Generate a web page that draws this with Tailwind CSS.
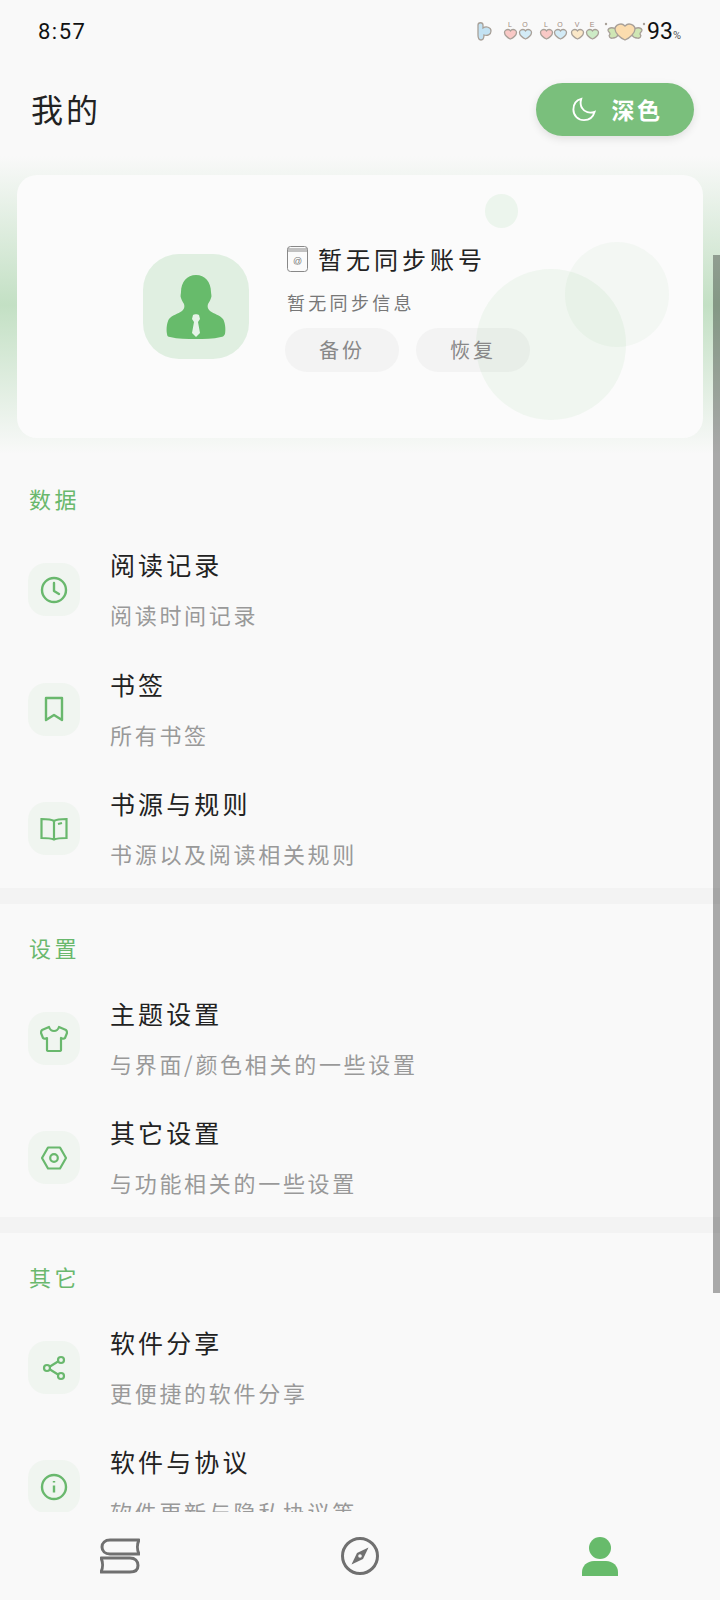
<!DOCTYPE html>
<html lang="zh">
<head>
<meta charset="UTF-8">
<meta name="viewport" content="width=device-width, initial-scale=1.0">
<script src="https://cdn.jsdelivr.net/npm/@tailwindcss/browser@4"></script>
</head>
<body class="bg-[#f9f9f9]">
<div class="relative w-[720px] h-[1600px] overflow-hidden flex flex-col bg-[#f9f9f9] font-['Noto_Sans_CJK_SC','Noto_Sans',sans-serif]">

  <!-- status bar -->
  <div class="h-[62px] shrink-0 flex items-center justify-between pl-[38px] pr-[39px] text-[#111]">
    <span class="font-['Roboto',sans-serif] text-[22px] tracking-[1.500px]">8:57</span>
    <div class="flex items-center">
      <svg class="w-[172px] h-[24px]" viewBox="476 18 172 24" fill="none" stroke="#a8a098" stroke-width="1.300">
        <path d="M479 24c0-3 5-3 5 0v3c3-2 8-1 8 3s-4 5-7 4c0 3-1 5-3 5s-3-2-3-5z" fill="#c3e2f3"/>
        <g id="hearts">
          <path d="M511.500 38c-3-1-6-4-6-6.500 0-2 2-3 3.500-3 1 0 2 .500 2.500 1.300.500-.8 1.500-1.300 2.500-1.300 1.500 0 3.500 1 3.500 3 0 2.500-3 5.500-6 6.500z" fill="#f9c9c6"/>
          <path d="M526.500 38c-3-1-6-4-6-6.500 0-2 2-3 3.500-3 1 0 2 .500 2.500 1.300.500-.8 1.500-1.300 2.500-1.300 1.500 0 3.500 1 3.500 3 0 2.500-3 5.500-6 6.500z" fill="#d3ebf6"/>
          <path d="M547.500 38c-3-1-6-4-6-6.500 0-2 2-3 3.500-3 1 0 2 .500 2.500 1.300.500-.8 1.500-1.300 2.500-1.300 1.500 0 3.500 1 3.500 3 0 2.500-3 5.500-6 6.500z" fill="#f9c9c6"/>
          <path d="M561.500 38c-3-1-6-4-6-6.500 0-2 2-3 3.500-3 1 0 2 .500 2.500 1.300.500-.8 1.500-1.300 2.500-1.300 1.500 0 3.500 1 3.500 3 0 2.500-3 5.500-6 6.500z" fill="#d3ebf6"/>
          <path d="M578.500 38c-3-1-6-4-6-6.500 0-2 2-3 3.500-3 1 0 2 .500 2.500 1.300.500-.8 1.500-1.300 2.500-1.300 1.500 0 3.500 1 3.500 3 0 2.500-3 5.500-6 6.500z" fill="#fbe8c8"/>
          <path d="M593.500 38c-3-1-6-4-6-6.500 0-2 2-3 3.500-3 1 0 2 .500 2.500 1.300.500-.8 1.500-1.300 2.500-1.300 1.500 0 3.500 1 3.500 3 0 2.500-3 5.500-6 6.500z" fill="#cdebc6"/>
        </g>
        <g fill="#a08a80" stroke="none" font-size="7" font-family="Liberation Sans, sans-serif" text-anchor="middle">
          <text x="511" y="26">L</text><text x="526" y="26">O</text><text x="547" y="26">L</text><text x="561" y="26">O</text><text x="578" y="26">V</text><text x="593" y="26">E</text>
        </g>
        <path d="M618 29c-3-3-8-3-9 0 0 2 2 2 2 4-2 2 0 5 3 4 2 0 4-1 5-3z" fill="#cfe6b4"/>
        <path d="M634 29c3-3 8-3 9 0 0 2-2 2-2 4 2 2 0 5-3 4-2 0-4-1-5-3z" fill="#cfe6b4"/>
        <path d="M626 39c-5-2-10-7-10-11 0-3 3-5 6-5 2 0 3 1 4 2 1-1 2-2 4-2 3 0 6 2 6 5 0 4-5 9-10 11z" fill="#fbdcae"/>
        <circle cx="607" cy="23" r="1.200" fill="#a8a098" stroke="none"/>
        <circle cx="645" cy="23" r="1.200" fill="#a8a098" stroke="none"/>
      </svg>
      <span class="font-['Roboto',sans-serif] text-[23px] leading-none">93<span class="text-[11px] text-[#555]">%</span></span>
    </div>
  </div>

  <!-- page title -->
  <div class="h-[94px] shrink-0 flex items-center justify-between pl-[31px] pr-[26px]">
    <h1 class="text-[32px] tracking-[3px] text-[#222] font-normal leading-none -mt-[2px]">我的</h1>
    <button class="w-[158px] h-[53px] pl-[4px] rounded-full bg-[#7abf7c] shadow-[0_3px_8px_rgba(0,0,0,0.1)] flex items-center justify-center gap-[16px] text-white text-[23px] font-bold tracking-[2.500px]">
      <svg class="w-[24px] h-[25px]" viewBox="0 0 26 27" fill="none" stroke="#fff" stroke-width="2"><path d="M10 2C4.500 3.500 1.500 8 1.500 13.500 1.500 20 6.500 25 13 25c5.500 0 10-3.500 11.500-9-5.500 2-11 .5-13.500-4C9 9 9 5.500 10 2z"/></svg>
      深色
    </button>
  </div>

  <!-- account card with green glow behind it -->
  <div class="shrink-0 h-[298px] pt-[19px] pb-[16px] px-[17px] bg-gradient-to-b from-transparent via-[#c3e0c4] to-transparent">
    <div class="relative h-full rounded-[20px] bg-[#fbfbfb] overflow-hidden pl-[126px] pt-[69px]">
      <div class="absolute left-[468px] top-[19px] w-[33px] h-[34px] rounded-full bg-[#ecf5ed]"></div>
      <div class="absolute left-[459px] top-[94px] w-[150px] h-[151px] rounded-full bg-[#64b968]/7"></div>
      <div class="absolute left-[548px] top-[67px] w-[104px] h-[105px] rounded-full bg-[#64b968]/5"></div>
      <div class="relative flex items-start gap-[37px]">
        <div class="mt-[10px] w-[106px] h-[105px] rounded-[36px] bg-[#e0efe1] flex items-center justify-center">
          <svg class="w-[60px] h-[64px]" viewBox="0 0 60 64"><path fill="#67bb6b" d="M30 0c9 0 15 7 15 17 0 2 1 4 0 6-1 3-2 4-3 6-1 3 0 5 2 7 4 3 10 4 13 8 2 3 3 10 2 15-1 2-2 3-4 3-8 2-17 2-25 2-9 0-18 0-26-2-2 0-3-1-3-3-1-5 0-12 2-15 3-4 9-5 13-8 2-2 3-4 2-7-1-2-2-3-3-6-1-2 0-4 0-6C15 7 21 0 30 0z"/><path fill="#e6f3e7" d="M27 40c1-1 5-1 6 0l1 4-2 3 2 11-4 4-4-4 2-11-2-3z"/></svg>
        </div>
        <div class="flex flex-col items-start">
          <div class="flex items-center gap-[10px] h-[30px]">
            <svg class="w-[21px] h-[26px] ml-[1px]" viewBox="0 0 21 26" fill="none" stroke="#888" stroke-width="1"><rect x=".500" y=".500" width="20" height="25" rx="3"/><path d="M.500 5h20M.500 3h20"/><text x="10.500" y="18" font-size="9" text-anchor="middle" fill="#777" stroke="none" font-family="Liberation Sans, sans-serif">@</text></svg>
            <span class="text-[24px] tracking-[4px] text-[#222] leading-none">暂无同步账号</span>
          </div>
          <div class="mt-[15px] ml-[1px] text-[18px] tracking-[3.300px] text-[#777] leading-[26px]">暂无同步信息</div>
          <div class="flex gap-[17px] mt-[13px] -ml-[1px]">
            <button class="w-[114px] h-[44px] rounded-[22px] bg-[#5a5a5a]/5 text-[#888] text-[20px] tracking-[3px]">备份</button>
            <button class="w-[114px] h-[44px] rounded-[22px] bg-[#5a5a5a]/5 text-[#888] text-[20px] tracking-[3px]">恢复</button>
          </div>
        </div>
      </div>
    </div>
  </div>

  <!-- data -->
  <section class="shrink-0 pt-[28px] h-[434px]">
    <h2 class="pl-[29px] text-[22px] tracking-[3.500px] text-[#69b86d] leading-[32px] font-normal">数据</h2>
    <div class="mt-[16px] flex flex-col">
      <a class="flex gap-[30px] h-[119.500px] pl-[28px] items-center">
        <span class="w-[52px] h-[53px] rounded-[18px] bg-[#f0f5f0] flex items-center justify-center text-[#69b86d]">
          <svg class="w-[28px] h-[28px]" viewBox="0 0 28 28" fill="none" stroke="currentColor" stroke-width="2.400"><circle cx="14" cy="14" r="12"/><path d="M14 7v8l5 3" stroke-linecap="round" stroke-linejoin="round"/></svg>
        </span>
        <span class="flex flex-col -mt-[4px]">
          <span class="text-[25px] tracking-[3.100px] text-[#222] leading-[36px]">阅读记录</span>
          <span class="mt-[17px] text-[22px] tracking-[2.700px] text-[#999] leading-[30px]">阅读时间记录</span>
        </span>
      </a>
      <a class="flex gap-[30px] h-[119.500px] pl-[28px] items-center">
        <span class="w-[52px] h-[53px] rounded-[18px] bg-[#f0f5f0] flex items-center justify-center text-[#69b86d]">
          <svg class="w-[20px] h-[26px]" viewBox="0 0 20 26" fill="none" stroke="currentColor" stroke-width="2.400"><path d="M2 2h16v22l-8-5-8 5z" stroke-linejoin="round"/></svg>
        </span>
        <span class="flex flex-col -mt-[4px]">
          <span class="text-[25px] tracking-[3.100px] text-[#222] leading-[36px]">书签</span>
          <span class="mt-[17px] text-[22px] tracking-[2.700px] text-[#999] leading-[30px]">所有书签</span>
        </span>
      </a>
      <a class="flex gap-[30px] h-[119.500px] pl-[28px] items-center">
        <span class="w-[52px] h-[53px] rounded-[18px] bg-[#f0f5f0] flex items-center justify-center text-[#69b86d]">
          <svg class="w-[28px] h-[24px]" viewBox="0 0 28 24" fill="none" stroke="currentColor" stroke-width="2.200"><path d="M14 4C11 2 5 2 1.500 2v19c4 0 9 0 12.500 1.500C17.500 21 22 21 26.500 21V2C22 2 17 2 14 4zM14 4v18M18 7l4-1"/></svg>
        </span>
        <span class="flex flex-col -mt-[4px]">
          <span class="text-[25px] tracking-[3.100px] text-[#222] leading-[36px]">书源与规则</span>
          <span class="mt-[17px] text-[22px] tracking-[2.700px] text-[#999] leading-[30px]">书源以及阅读相关规则</span>
        </span>
      </a>
    </div>
  </section>
  <div class="shrink-0 h-[16px] bg-[#f3f3f3]"></div>

  <!-- settings -->
  <section class="shrink-0 pt-[27px] h-[313px]">
    <h2 class="pl-[29px] text-[22px] tracking-[3.500px] text-[#69b86d] leading-[32px] font-normal">设置</h2>
    <div class="mt-[16px] flex flex-col">
      <a class="flex gap-[30px] h-[119px] pl-[28px] items-center">
        <span class="w-[52px] h-[53px] rounded-[18px] bg-[#f0f5f0] flex items-center justify-center text-[#69b86d]">
          <svg class="w-[28px] h-[28px]" viewBox="0 0 28 28" fill="none" stroke="currentColor" stroke-width="2.200"><path d="M9 2c1 3 3 4 5 4s4-1 5-4l7 3c1 1 1 2 1 3l-2 5c-1 1-2 1-4 0v12c0 1-1 1-2 1H9c-1 0-2 0-2-1V13c-2 1-3 1-4 0L1 8c0-1 0-2 1-3z" stroke-linejoin="round"/></svg>
        </span>
        <span class="flex flex-col -mt-[4px]">
          <span class="text-[25px] tracking-[3.100px] text-[#222] leading-[36px]">主题设置</span>
          <span class="mt-[17px] text-[22px] tracking-[2.700px] text-[#999] leading-[30px]">与界面/颜色相关的一些设置</span>
        </span>
      </a>
      <a class="flex gap-[30px] h-[119px] pl-[28px] items-center">
        <span class="w-[52px] h-[53px] rounded-[18px] bg-[#f0f5f0] flex items-center justify-center text-[#69b86d]">
          <svg class="w-[26px] h-[24px]" viewBox="0 0 26 24" fill="none" stroke="currentColor" stroke-width="2.200"><path d="M7 1.500h12l6 10.500-6 10.500H7L1 12z" stroke-linejoin="round"/><circle cx="13" cy="12" r="3.800"/></svg>
        </span>
        <span class="flex flex-col -mt-[4px]">
          <span class="text-[25px] tracking-[3.100px] text-[#222] leading-[36px]">其它设置</span>
          <span class="mt-[17px] text-[22px] tracking-[2.700px] text-[#999] leading-[30px]">与功能相关的一些设置</span>
        </span>
      </a>
    </div>
  </section>
  <div class="shrink-0 h-[16px] bg-[#f3f3f3]"></div>

  <!-- others: list is cut off by the bottom nav -->
  <section class="flex-1 min-h-0 overflow-hidden pt-[27px]">
    <h2 class="pl-[29px] text-[22px] tracking-[3.500px] text-[#69b86d] leading-[32px] font-normal">其它</h2>
    <div class="mt-[16px] flex flex-col">
      <a class="shrink-0 flex gap-[30px] h-[119px] pl-[28px] items-center">
        <span class="w-[52px] h-[53px] rounded-[18px] bg-[#f0f5f0] flex items-center justify-center text-[#69b86d]">
          <svg class="w-[24px] h-[26px]" viewBox="0 0 24 26" fill="none" stroke="currentColor" stroke-width="2.200"><circle cx="19" cy="5" r="3"/><circle cx="5" cy="13" r="3"/><circle cx="19" cy="21" r="3"/><path d="M8 11.500l8-5M8 14.500l8 5"/></svg>
        </span>
        <span class="flex flex-col -mt-[4px]">
          <span class="text-[25px] tracking-[3.100px] text-[#222] leading-[36px]">软件分享</span>
          <span class="mt-[17px] text-[22px] tracking-[2.700px] text-[#999] leading-[30px]">更便捷的软件分享</span>
        </span>
      </a>
      <a class="shrink-0 flex gap-[30px] h-[119px] pl-[28px] items-center">
        <span class="w-[52px] h-[53px] rounded-[18px] bg-[#f0f5f0] flex items-center justify-center text-[#69b86d]">
          <svg class="w-[28px] h-[28px]" viewBox="0 0 28 28" fill="none" stroke="currentColor" stroke-width="2.400"><circle cx="14" cy="14" r="12"/><path d="M14 12.500v7M14 8v1.500"/></svg>
        </span>
        <span class="flex flex-col -mt-[4px]">
          <span class="text-[25px] tracking-[3.100px] text-[#222] leading-[36px]">软件与协议</span>
          <span class="mt-[17px] text-[22px] tracking-[2.700px] text-[#999] leading-[30px]">软件更新与隐私协议等</span>
        </span>
      </a>
    </div>
  </section>

  <!-- bottom nav -->
  <nav class="shrink-0 h-[88px] bg-[#f9f9f9] grid grid-cols-3 items-center">
    <div class="flex justify-center">
      <svg class="w-[40px] h-[36px]" viewBox="0 0 40 36" fill="none" stroke="#707070" stroke-width="3"><path d="M39 2H10C5 2 2 5 2 9s3 7 8 7h29c-2-4-2-10 0-14zM1 20h29c5 0 8 3 8 7.500S35 34 30 34H1c2-4 2-10 0-14z" stroke-linejoin="round"/></svg>
    </div>
    <div class="flex justify-center">
      <svg class="w-[38px] h-[38px]" viewBox="0 0 38 38"><circle cx="19" cy="19" r="17.500" fill="none" stroke="#707070" stroke-width="3"/><path d="M27.500 10.500L22 22 10.500 27.500 16 16z" fill="#707070"/><circle cx="19" cy="19" r="1.800" fill="#f9f9f9"/></svg>
    </div>
    <div class="flex justify-center">
      <svg class="w-[36px] h-[39px]" viewBox="0 0 36 39" fill="#67bb6b"><ellipse cx="18" cy="11" rx="11" ry="11"/><path d="M0 39v-4c0-6 5-11 12-11h12c7 0 12 5 12 11v4z"/></svg>
    </div>
  </nav>

  <!-- scrollbar -->
  <div class="absolute right-0 top-[255px] w-[7px] h-[1038px] bg-black/32"></div>
</div>
</body>
</html>
